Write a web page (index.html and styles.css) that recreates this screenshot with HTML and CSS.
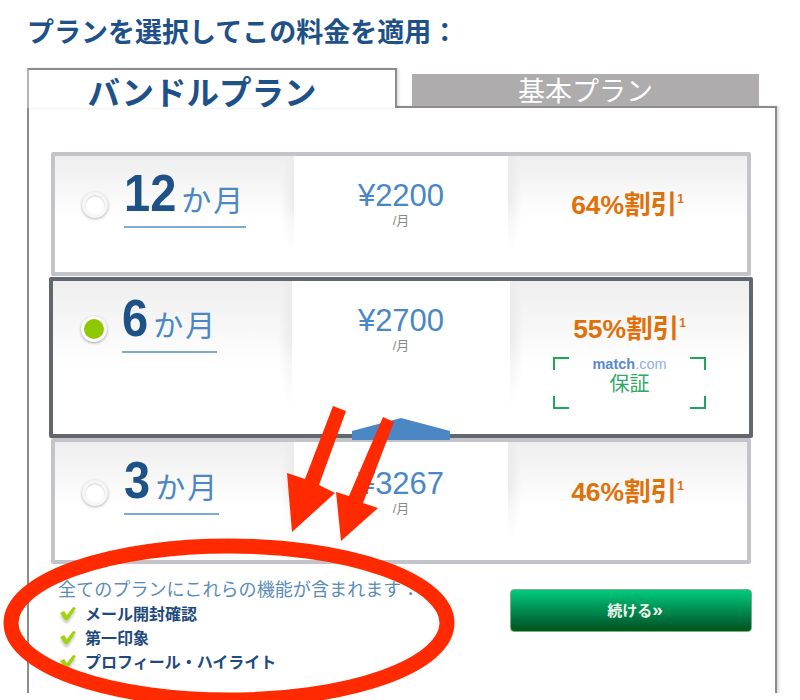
FILE: index.html
```html
<!DOCTYPE html>
<html lang="ja">
<head>
<meta charset="utf-8">
<title>プラン選択</title>
<link rel="stylesheet" href="styles.css">
</head>
<body>
<main class="page">
  <h1 class="title">プランを選択してこの料金を適用：</h1>
  <div class="tabs">
    <div class="tab tab-active">バンドルプラン</div>
    <div class="tab tab-idle">基本プラン</div>
  </div>
  <section class="panel">
    <div class="plans">
      <div class="plan">
        <div class="cell cell-term">
          <span class="radio"></span>
          <div class="term"><b>12</b><span>か月</span></div>
        </div>
        <div class="cell cell-price"><div class="price">¥2200</div><div class="per">/月</div></div>
        <div class="cell cell-off"><div class="off">64%割引<sup>1</sup></div></div>
      </div>
      <div class="plan plan-on">
        <div class="cell cell-term">
          <span class="radio radio-on"></span>
          <div class="term"><b>6</b><span>か月</span></div>
        </div>
        <div class="cell cell-price"><div class="price">¥2700</div><div class="per">/月</div></div>
        <div class="cell cell-off">
          <div class="off">55%割引<sup>1</sup></div>
          <div class="guarantee">
            <div class="brand"><b>match</b>.com</div>
            <div class="promise">保証</div>
          </div>
        </div>
        <svg class="notch" viewBox="0 0 98 23" width="98" height="23" aria-hidden="true"><path d="M0 14 49 1 98 14V23H0Z" fill="#4a87c4"/></svg>
      </div>
      <div class="plan plan-last">
        <div class="cell cell-term">
          <span class="radio"></span>
          <div class="term"><b>3</b><span>か月</span></div>
        </div>
        <div class="cell cell-price"><div class="price">¥3267</div><div class="per">/月</div></div>
        <div class="cell cell-off"><div class="off">46%割引<sup>1</sup></div></div>
      </div>
    </div>
    <div class="foot">
      <div class="features">
        <p class="lead">全てのプランにこれらの機能が含まれます：</p>
        <ul class="list">
          <li><svg class="tick" viewBox="0 0 16 14" width="16" height="14" aria-hidden="true"><path d="M0 6 4 4 7 8 13 0 16 1 8 13 5 13Z" fill="#a2d30f"/></svg>メール開封確認</li>
          <li><svg class="tick" viewBox="0 0 16 14" width="16" height="14" aria-hidden="true"><path d="M0 6 4 4 7 8 13 0 16 1 8 13 5 13Z" fill="#a2d30f"/></svg>第一印象</li>
          <li><svg class="tick" viewBox="0 0 16 14" width="16" height="14" aria-hidden="true"><path d="M0 6 4 4 7 8 13 0 16 1 8 13 5 13Z" fill="#a2d30f"/></svg>プロフィール・ハイライト</li>
        </ul>
      </div>
      <button class="go" type="button">続ける<span class="go-mark">&raquo;</span></button>
    </div>
  </section>
</main>
<svg class="marks" viewBox="0 0 800 700" width="800" height="700" aria-hidden="true">
  <ellipse cx="229" cy="623" rx="218" ry="77" fill="none" stroke="#ff2a00" stroke-width="15"/>
  <path d="M333 406 346 411 319 485 335 493 292 532 287 473 305 479Z" fill="#ff2a00"/>
  <path d="M383 417 394 422 363 503 378 508 341 541 336 492 349 496Z" fill="#ff2a00"/>
</svg>
</body>
</html>
```
FILE: styles.css
```css
html, body { margin: 0; padding: 0; background: #fff; }
body { width: 800px; height: 700px; overflow: hidden; position: relative; font-family: "Liberation Sans", "Noto Sans CJK JP", sans-serif; }
.page { padding: 0 23px 0 27px; height: 693px; overflow: hidden; box-sizing: border-box; }
.title { margin: 0; padding: 17px 0 0 0; height: 68px; box-sizing: border-box; font-size: 27px; line-height: 32px; font-weight: 700; color: #1d5187; white-space: nowrap; }
.tabs { display: flex; align-items: flex-end; height: 38px; }
.tab { box-sizing: border-box; text-align: center; white-space: nowrap; }
.tab-active { width: 370px; margin-bottom: -2px; height: 40px; border: 2px solid #8c8c8c; border-left-color: #b4b4b4; border-bottom: 0; background: #fff; position: relative; z-index: 1; font-size: 32.5px; line-height: 48px; font-weight: 700; color: #1d5187; padding-right: 20px; box-shadow: 2px 0 2px rgba(0,0,0,.12); }
.tab-idle { width: 347px; height: 32px; margin-left: 15px; padding-top: 5px; background: #aeacad; color: #fff; font-size: 27px; line-height: 27px; }
.panel { box-sizing: border-box; height: 587px; border: 2px solid #8c8c8c; border-bottom: 0; padding: 44px 24px 0 22px; box-shadow: 2px 0 2px rgba(0,0,0,.15); }
.plans { display: flex; flex-direction: column; }
.plan { position: relative; display: grid; grid-template-columns: 239px 214px 1fr; height: 124px; box-sizing: border-box; border: 4px solid #c2c4c9; border-radius: 2px; }
.plan-on { height: 161px; margin: 1px -2px 0; grid-template-columns: 239px 218px 1fr; border-color: #62666f; z-index: 1; }
.plan-last { height: 126px; }
.cell { box-sizing: border-box; position: relative; }
.cell-term { padding: 14px 0 0 69px; background: radial-gradient(14px 46% at 100% 38%, rgba(0,0,0,.06), transparent), linear-gradient(#eeeeef, #fff 55%); }
.cell-off { text-align: center; padding-top: 31px; background: radial-gradient(14px 46% at 0 38%, rgba(0,0,0,.06), transparent), linear-gradient(#eeeeef, #fff 55%); }
.cell-price { background: #fff; text-align: center; padding-top: 22px; }
.plan-last .cell-term { padding-top: 15px; }
.plan-last .cell-price { padding-top: 24px; }
.plan-last .cell-off { padding-top: 32px; }
.plan-on .cell-off { padding-top: 30px; }
.radio { position: absolute; left: 27px; top: 36px; width: 26px; height: 26px; box-sizing: border-box; border-radius: 50%; background: #fff; border: 3px solid #f6f6f6; box-shadow: 0 1px 3px rgba(0,0,0,.3), inset 0 1px 2px rgba(0,0,0,.2); }
.radio-on { left: 28px; top: 35px; background: #8fc800; border-color: #fff; box-shadow: 0 1px 3px rgba(0,0,0,.35); }
.plan-last .radio { top: 38px; }
.term { display: inline-block; height: 58px; min-width: 122px; box-sizing: border-box; border-bottom: 2px solid #7eabd0; white-space: nowrap; line-height: 46px; }
.plan-on .term, .plan-last .term { min-width: 95px; }
.term b { display: inline-block; font-size: 47px; color: #1d5187; margin-right: 5px; transform: scaleY(1.12); }
.term span { font-size: 30px; letter-spacing: 2px; color: #4a87c4; position: relative; top: 2px; }
.price { font-size: 31px; line-height: 36px; color: #4a87c4; }
.per { font-size: 13px; line-height: 16px; margin-top: -1px; color: #888; }
.off { font-size: 26.5px; line-height: 34px; font-weight: 700; color: #e0700a; white-space: nowrap; padding-top: 1px; }
.off sup { font-size: 12px; line-height: 0; vertical-align: 11px; }
.guarantee { width: 153px; height: 52px; margin: 11px auto 0; box-sizing: border-box; padding-top: 1px; text-align: center; background:
  linear-gradient(#1ea65a, #1ea65a) 0 0 / 16px 2px no-repeat,
  linear-gradient(#1ea65a, #1ea65a) 0 0 / 2px 13px no-repeat,
  linear-gradient(#1ea65a, #1ea65a) 100% 0 / 16px 2px no-repeat,
  linear-gradient(#1ea65a, #1ea65a) 100% 0 / 2px 13px no-repeat,
  linear-gradient(#1ea65a, #1ea65a) 0 100% / 16px 2px no-repeat,
  linear-gradient(#1ea65a, #1ea65a) 0 100% / 2px 13px no-repeat,
  linear-gradient(#1ea65a, #1ea65a) 100% 100% / 16px 2px no-repeat,
  linear-gradient(#1ea65a, #1ea65a) 100% 100% / 2px 13px no-repeat; }
.brand { font-size: 14.5px; line-height: 12px; color: #8fb0de; }
.brand b { color: #5a8ac9; }
.promise { font-size: 20px; line-height: 28px; color: #2fa866; }
.notch { position: absolute; left: 299px; bottom: -6px; }
.foot { display: flex; justify-content: space-between; align-items: flex-start; padding: 0 0 0 7px; margin-top: 13px; }
.lead { margin: 0; font-size: 18.1px; line-height: 26px; color: #5b8cb8; white-space: nowrap; }
.list { list-style: none; margin: -2px 0 0; padding: 0; }
.list li { display: flex; align-items: center; height: 24px; font-size: 16px; font-weight: 700; color: #1f4a7d; white-space: nowrap; }
.tick { margin: 2px 9px 0 2px; filter: drop-shadow(0 3px 1px rgba(0,0,0,.2)); }
.go { width: 242px; height: 43px; margin: 12px -1px 0 0; padding: 0 0 2px 8px; border: 1px solid #80ac8a; border-radius: 4px; background: linear-gradient(#00cb7c, #006030 85%, #005c10); color: #f0f8ee; font-family: inherit; font-size: 15px; font-weight: 700; }
.go-mark { font-size: 19px; line-height: 0; }
.marks { position: absolute; left: 0; top: 0; z-index: 2; pointer-events: none; }
```
